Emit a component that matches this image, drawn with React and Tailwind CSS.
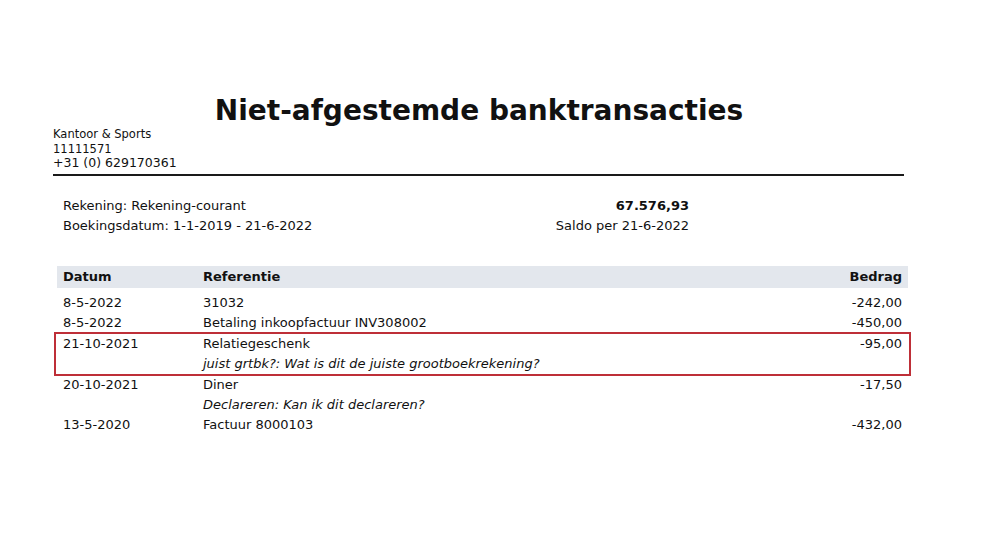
const rows = [
  { date: "8-5-2022", ref: "31032", amount: "-242,00" },
  { date: "8-5-2022", ref: "Betaling inkoopfactuur INV308002", amount: "-450,00" },
  {
    date: "21-10-2021",
    ref: "Relatiegeschenk",
    amount: "-95,00",
    note: "juist grtbk?: Wat is dit de juiste grootboekrekening?",
    flagged: true,
  },
  {
    date: "20-10-2021",
    ref: "Diner",
    amount: "-17,50",
    note: "Declareren: Kan ik dit declareren?",
  },
  { date: "13-5-2020", ref: "Factuur 8000103", amount: "-432,00" },
];

function Row({ row }) {
  return (
    <div
      className={
        row.flagged
          ? "-mx-[3px] -my-[1px] border-2 border-[#be2f38] px-[1px]"
          : ""
      }>
      <div className="flex h-5 items-center px-[6px]">
        <div className="w-[140px]">{row.date}</div>
        <div className="flex-1">{row.ref}</div>
        <div className="text-right">{row.amount}</div>
      </div>
      {row.note && (
        <div className="flex h-5 items-center px-[6px]">
          <div className="w-[140px]" />
          <div className="flex-1 italic">{row.note}</div>
        </div>
      )}
    </div>
  );
}

export default function App() {
  return (
    <div className="w-[999px] h-[535px] bg-white text-[#111] font-['DejaVu_Sans',Verdana,sans-serif]">
      {/* Title */}
      <h1 className="pt-[94px] pr-[41px] text-center text-[28px] font-bold leading-[33px]">
        Niet-afgestemde banktransacties
      </h1>

      {/* Company */}
      <div className="ml-[53px] w-[851px] border-b-2 border-[#1a1a1a] pb-[3px] text-[11.5px] leading-[14.5px]">
        <p>Kantoor &amp; Sports</p>
        <p>11111571</p>
        <p className="text-[12.5px]">+31 (0) 629170361</p>
      </div>

      {/* Account info */}
      <div className="ml-[63px] mt-[20px] flex w-[626px] justify-between text-[13px] leading-5">
        <div>
          <p>Rekening: Rekening-courant</p>
          <p>Boekingsdatum: 1-1-2019 - 21-6-2022</p>
        </div>
        <div className="text-right">
          <p className="font-bold">67.576,93</p>
          <p>Saldo per 21-6-2022</p>
        </div>
      </div>

      {/* Table */}
      <div className="ml-[57px] mt-[30px] w-[851px] text-[13px]">
        <div className="flex h-[22px] items-center bg-[#e3e7ed] px-[6px] font-bold">
          <div className="w-[140px]">Datum</div>
          <div className="flex-1">Referentie</div>
          <div className="text-right">Bedrag</div>
        </div>
        <div className="mt-[5px]">
          {rows.map((row, i) => (
            <Row key={i} row={row} />
          ))}
        </div>
      </div>
    </div>
  );
}
